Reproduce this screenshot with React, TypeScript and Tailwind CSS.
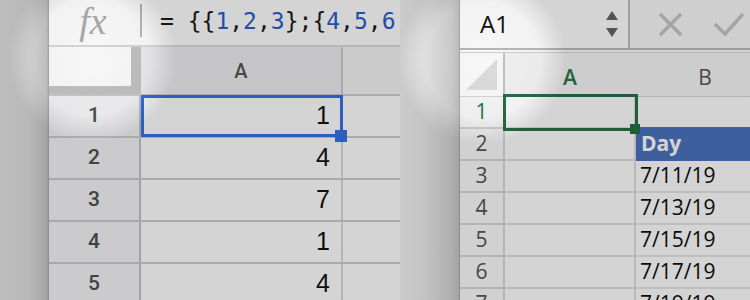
const sheetRows = [1, 4, 7, 1, 4];

const excelRows: { n: number; b: string }[] = [
  { n: 1, b: '' },
  { n: 2, b: 'Day' },
  { n: 3, b: '7/11/19' },
  { n: 4, b: '7/13/19' },
  { n: 5, b: '7/15/19' },
  { n: 6, b: '7/17/19' },
  { n: 7, b: '7/19/19' },
];

const FormulaText = () => {
  // = {{1,2,3};{4,5,6
  const parts: [string, boolean][] = [
    ['= {{', false], ['1', true], [',', false], ['2', true], [',', false], ['3', true],
    ['};{', false], ['4', true], [',', false], ['5', true], [',', false], ['6', true],
  ];
  return (
    <span className="font-['DejaVu_Sans_Mono',monospace] text-[23px] whitespace-pre text-[#1a1a1a]">
      {parts.map(([t, blue], i) => (
        <span key={i} className={blue ? 'text-[#2a5bcc]' : ''}>{t}</span>
      ))}
    </span>
  );
};

const SheetsPanel = () => (
  <div className="w-[351px] shrink-0 flex flex-col bg-white font-['Roboto',sans-serif]">
    {/* formula bar */}
    <div className="h-[47px] shrink-0 flex items-center border-b-2 border-[#dbdbdb] bg-white">
      <div className="w-[91px] flex justify-center">
        <span className="font-['Liberation_Serif',serif] italic text-[38px] leading-[44px] text-[#adadad] pr-[3px] -mt-1">fx</span>
      </div>
      <div className="w-[2px] h-[33px] bg-[#b8b8b8] -mt-1" />
      <div className="pl-[18px] -mt-0.5">
        <FormulaText />
      </div>
    </div>

    {/* column header */}
    <div className="h-[49px] shrink-0 flex border-b-2 border-[#cccccc]">
      <div className="w-[92px] shrink-0 flex flex-col bg-[#c4c4c4]">
        <div className="w-[82px] h-[39px] bg-white" />
      </div>
      <div className="w-[202px] shrink-0 flex items-center justify-center bg-[#eeeef0] border-r-2 border-[#cdcdcd] text-[20px] font-medium text-[#555]">
        A
      </div>
      <div className="flex-1 bg-[#f5f5f5]" />
    </div>

    {/* rows */}
    <div className="relative">
      {sheetRows.map((v, i) => (
        <div key={i} className="h-[42px] flex border-b-2 border-[#cccccc]">
          <div className="w-[92px] shrink-0 flex items-center justify-center bg-[#f4f4f6] border-r-2 border-[#c4c4c4] text-[21px] font-medium text-[#4f4f4f]">
            {i + 1}
          </div>
          <div className="w-[202px] shrink-0 flex items-center justify-end pr-[11px] border-r-2 border-[#d9d9d9] font-['Liberation_Sans',Arial,sans-serif] text-[25px] text-[#111]">
            {v}
          </div>
          <div className="flex-1" />
        </div>
      ))}
      <div className="absolute left-[92px] top-[-1px] w-[202px] h-[42px] border-[3px] border-[#3371e6]" />
      <div className="absolute left-[286px] top-[34px] w-[12px] h-[12px] bg-[#3371e6]" />
    </div>
  </div>
);

const ExcelPanel = () => (
  <div className="flex-1 flex flex-col bg-white font-['Open_Sans',sans-serif] border-l border-[#ababab]">
    {/* name box + formula bar */}
    <div className="h-[50px] shrink-0 flex border-b-2 border-[#bcbcbc]">
      <div className="w-[170px] shrink-0 flex items-center justify-between pl-[20px] pr-[8px] bg-white border-r-2 border-[#c0c0c0]">
        <span className="text-[24px] font-medium text-[#0f0f0f]">A1</span>
        <svg width="16" height="32" viewBox="0 0 16 32">
          <path d="M8 3 L14 12 L2 12 Z" fill="#666" />
          <path d="M2 20 L14 20 L8 29 Z" fill="#666" />
        </svg>
      </div>
      <div className="flex-1 flex items-center bg-[#f9f9f9]">
        <svg width="120" height="40" viewBox="0 0 120 40" className="ml-[27px]">
          <path d="M3 10 L24 31 M24 10 L3 31" stroke="#c6c6c6" strokeWidth="3.5" fill="none" />
          <path d="M58 20 L68 30 L86 10" stroke="#c6c6c6" strokeWidth="3.5" fill="none" />
        </svg>
      </div>
    </div>
    <div className="h-[3px] shrink-0 bg-white border-b border-[#d4d4d4]" />

    {/* column header */}
    <div className="h-[44px] shrink-0 flex border-b border-[#d9d9d9]">
      <div className="w-[45px] shrink-0 flex items-end justify-end pr-[5px] pb-[5px] bg-white border-r-2 border-[#c7c7c7]">
        <svg width="32" height="32" viewBox="0 0 32 32">
          <path d="M31 0 L31 31 L0 31 Z" fill="#e2e2e2" />
        </svg>
      </div>
      <div className="w-[131px] shrink-0 flex flex-col bg-[#f7f7f7] border-r border-[#dedede]">
        <div className="flex-1 flex items-center justify-center text-[21px] font-semibold text-[#237a4a] pt-[9px]">A</div>
        <div className="h-[3px] bg-[#237a4a]" />
      </div>
      <div className="flex-1 flex items-center justify-center text-[21px] font-medium text-[#555] bg-[#f7f7f7] pt-[6px] -ml-[3px]">
        B
      </div>
    </div>

    {/* rows */}
    <div className="relative">
      {excelRows.map((r) => (
        <div key={r.n} className="h-[32px] flex">
          <div
            className={`w-[45px] shrink-0 flex items-center justify-center bg-[#fbfbfb] border-r-2 border-b-2 border-[#d8d8d8] text-[21px] font-medium ${
              r.n === 1 ? 'text-[#237a4a]' : 'text-[#555]'
            }`}
          >
            {r.n}
          </div>
          <div className="w-[131px] shrink-0 border-r-2 border-b-2 border-[#dedede]" />
          {r.b === 'Day' ? (
            <div className="flex-1 flex items-center justify-between pl-[5px] bg-[#4b72be] -mt-[2px] h-[34px]">
              <span className="text-[21px] font-bold text-white">Day</span>
              <div className="w-[24px] h-[28px] mr-[-8px] flex items-center justify-center border-2 border-[#334060] bg-[#f9f9f9]">
                <svg width="12" height="8" viewBox="0 0 12 8">
                  <path d="M0 0 L12 0 L6 7 Z" fill="#7b7b7b" />
                </svg>
              </div>
            </div>
          ) : (
            <div className={`flex-1 flex items-center pl-[4px] text-[21px] font-medium text-[#0c0c0c] ${r.n === 1 ? '' : 'border-b-2 border-[#e4e4e4]'}`}>
              {r.b}
            </div>
          )}
        </div>
      ))}
      <div className="absolute left-[43px] top-[-3px] w-[135px] h-[37px] border-[3px] border-[#257145]" />
      <div className="absolute left-[170px] top-[27px] w-[10px] h-[10px] bg-[#257145]" />
    </div>
  </div>
);

export default function App() {
  return (
    <div className="relative w-[750px] h-[300px] overflow-hidden flex bg-[#e0e0e0]">
      <div className="w-[49px] shrink-0 bg-[linear-gradient(to_right,#e4e4e4_0%,#dddddd_60%,#c6c6c6_95%,#a6a6a6_100%)]" />
      <SheetsPanel />
      <div className="w-[59px] shrink-0 bg-[linear-gradient(to_right,#f5f5f5_0%,#ececec_40%,#d4d4d4_85%,#c3c3c3_100%)]" />
      <ExcelPanel />
      {/* dimming with a spotlight over each half */}
      <div className="pointer-events-none absolute left-0 top-0 w-[400px] h-full bg-[radial-gradient(circle_at_92px_58px,rgba(0,0,0,0.03)_0px,rgba(0,0,0,0.05)_58px,rgba(0,0,0,0.17)_84px)]" />
      <div className="pointer-events-none absolute left-[400px] top-0 w-[350px] h-full bg-[radial-gradient(circle_at_82px_60px,rgba(0,0,0,0.03)_0px,rgba(0,0,0,0.05)_58px,rgba(0,0,0,0.17)_84px)]" />
    </div>
  );
}
